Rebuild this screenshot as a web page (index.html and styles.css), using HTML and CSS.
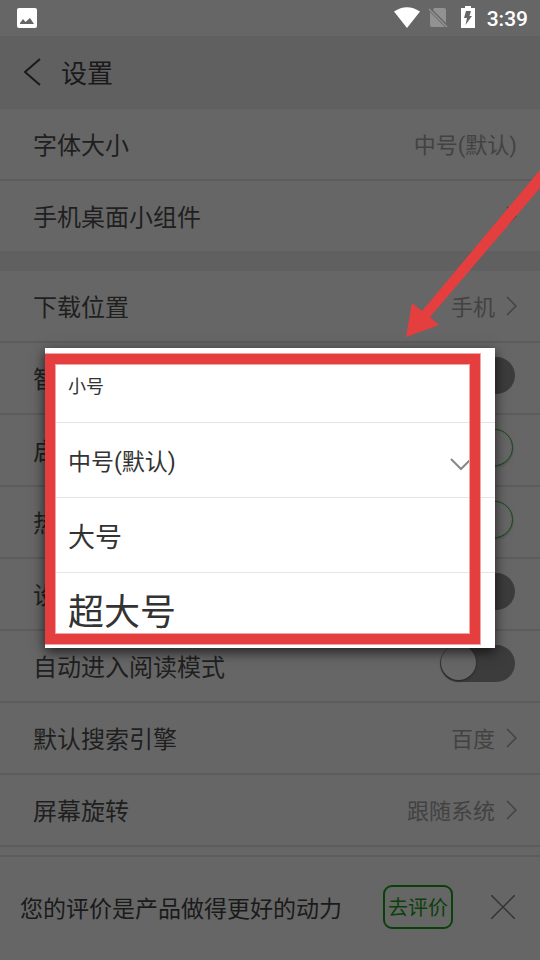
FILE: index.html
```html
<!DOCTYPE html>
<html lang="zh-CN">

<head>
    <meta charset="UTF-8">
    <meta name="viewport" content="width=device-width, initial-scale=1.0">
    <title>设置</title>
    <link rel="stylesheet" href="styles.css">
</head>

<body>
    <div class="statusbar">
        <svg class="photo" width="20" height="20" viewBox="0 0 20 20">
            <rect width="20" height="20" rx="2" fill="#fff" />
            <path d="M3 16v-1l3-4 2.500 3L13 10l4 6z" fill="#666" />
        </svg>
        <div class="status-icons">
            <svg width="26" height="22" viewBox="0 0 26 22">
                <path d="M0 5.500Q13-3 26 5.500L13 22z" fill="#fff" />
            </svg>
            <svg class="sim" width="20" height="22" viewBox="0 0 20 22">
                <path d="M6 2h10q2 0 2 2v13L5 4zM2 6l15 15H4q-2 0-2-2z" fill="#929292" />
                <path d="M1 3l18 18" stroke="#929292" stroke-width="1.500" />
            </svg>
            <svg class="battery" width="14" height="22" viewBox="0 0 14 22">
                <path d="M4 0h6v2h4v20H0V2h4z" fill="#fff" />
                <path d="M5 5h5L8.500 10H11L4.500 19l1.500-7H3z" fill="#666" />
            </svg>
            <span class="time">3:39</span>
        </div>
    </div>

    <header class="header">
        <a href="#" class="back" aria-label="返回">
            <svg width="18" height="28" viewBox="0 0 18 28">
                <path d="M17 1L2 14l15 13" />
            </svg>
        </a>
        <h1>设置</h1>
    </header>

    <main>
        <section class="group">
            <a href="#" class="row"><span>字体大小</span><span class="value">中号(默认)</span></a>
            <a href="#" class="row">
                <span>手机桌面小组件</span>
                <svg class="chevron" width="11" height="20" viewBox="0 0 11 20"><path d="M1 1l9 9-9 9" /></svg>
            </a>
        </section>

        <section class="group">
            <a href="#" class="row">
                <span>下载位置</span>
                <span class="value">手机</span>
                <svg class="chevron" width="11" height="20" viewBox="0 0 11 20"><path d="M1 1l9 9-9 9" /></svg>
            </a>
            <label class="row"><span>智</span><input type="checkbox" class="switch"></label>
            <label class="row"><span>启</span><input type="checkbox" class="switch" checked></label>
            <label class="row"><span>热</span><input type="checkbox" class="switch" checked></label>
            <label class="row"><span>设</span><input type="checkbox" class="switch"></label>
            <label class="row"><span>自动进入阅读模式</span><input type="checkbox" class="switch"></label>
            <a href="#" class="row">
                <span>默认搜索引擎</span>
                <span class="value">百度</span>
                <svg class="chevron" width="11" height="20" viewBox="0 0 11 20"><path d="M1 1l9 9-9 9" /></svg>
            </a>
            <a href="#" class="row">
                <span>屏幕旋转</span>
                <span class="value">跟随系统</span>
                <svg class="chevron" width="11" height="20" viewBox="0 0 11 20"><path d="M1 1l9 9-9 9" /></svg>
            </a>
        </section>
    </main>

    <footer class="rate">
        <p>您的评价是产品做得更好的动力</p>
        <button type="button" class="rate-btn">去评价</button>
        <button type="button" class="close" aria-label="关闭">
            <svg width="24" height="24" viewBox="0 0 24 24">
                <path d="M0 0l24 24M24 0L0 24" />
            </svg>
        </button>
    </footer>

    <div class="overlay">
        <form class="dialog" role="dialog" aria-label="字体大小">
            <label class="option small"><input type="radio" name="size"><span>小号</span></label>
            <label class="option medium">
                <input type="radio" name="size" checked>
                <span>中号(默认)</span>
                <svg class="check" width="22" height="13" viewBox="0 0 22 13"><path d="M1 1l10 10L21 1" /></svg>
            </label>
            <label class="option large"><input type="radio" name="size"><span>大号</span></label>
            <label class="option huge"><input type="radio" name="size"><span>超大号</span></label>
            <div class="frame"></div>
        </form>
    </div>

    <svg class="arrow" width="134" height="168" viewBox="0 0 134 168">
        <path d="M134 1L16 142 6 134 0 168l33-12-9-8L134 19z" />
    </svg>
</body>

</html>
```

FILE: styles.css
```css
* {
    box-sizing: border-box;
}

body {
    position: relative;
    display: flex;
    flex-direction: column;
    min-height: 100vh;
    margin: 0;
    background: #666;
    color: #1f1f1f;
    font-family: Roboto, "Noto Sans CJK SC", sans-serif;
    font-size: 24px;
}

svg {
    display: block;
    flex: none;
}

a {
    color: inherit;
    text-decoration: none;
}

.statusbar {
    display: flex;
    justify-content: space-between;
    align-items: center;
    height: 36px;
    padding: 0 12px 0 17px;
}

.status-icons {
    display: flex;
    align-items: center;
    height: 34px;
    margin-bottom: 2px;
}

.sim {
    margin-left: 8px;
}

.battery {
    margin: 0 12px 0 13px;
}

.time {
    padding-top: 3px;
    color: #fff;
    font-size: 21px;
    font-weight: 500;
}

.header {
    display: flex;
    align-items: center;
    gap: 20px;
    height: 73px;
    padding-left: 23px;
    background: #606060;
    border-bottom: 1px solid #5e5e5e;
}

.header h1 {
    margin: 0;
    padding-bottom: 2px;
    font-size: 26px;
    font-weight: 400;
    color: #1a1a1a;
}

.back path {
    fill: none;
    stroke: #1a1a1a;
    stroke-width: 2;
}

.group + .group {
    border-top: 20px solid #606060;
}

.row {
    display: flex;
    align-items: center;
    height: 72px;
    padding: 0 23px 0 33px;
    border-bottom: 2px solid #5c5c5c;
}

.group:first-child .row:last-child {
    height: 70px;
    border-bottom: none;
}

.row span {
    padding-bottom: 2px;
}

.row span:first-child {
    margin-right: auto;
}

.value {
    color: #424242;
    font-size: 22px;
}

.chevron {
    margin-left: 11px;
}

.chevron path {
    fill: none;
    stroke: #424242;
    stroke-width: 1.5;
}

.switch {
    appearance: none;
    width: 75px;
    height: 37px;
    margin: 0 2px 5px 0;
    border-radius: 19px;
    background: #3c3c3c;
}

.switch::before {
    content: '';
    display: block;
    width: 35px;
    height: 35px;
    margin: 0 1px;
    border-radius: 50%;
    background: #666;
    box-shadow: 0 1px 2px #222;
}

.switch:checked {
    margin-right: 4px;
    border: 1px solid #154d15;
    background: #666;
    box-shadow: 0 1px 2px #4c4c4c;
}

.switch:checked::before {
    margin-left: auto;
    box-shadow: none;
}

.rate {
    display: flex;
    align-items: center;
    height: 105px;
    margin-top: auto;
    padding: 0 25px 4px 20px;
    border-top: 2px solid #5c5c5c;
}

.rate p {
    margin: 0 auto 0 0;
    color: #1a1a1a;
    font-size: 23px;
}

.rate-btn {
    width: 70px;
    height: 44px;
    padding: 0;
    border: 2px solid #0a400a;
    border-radius: 9px;
    background: none;
    color: #0a400a;
    font-family: inherit;
    font-size: 20px;
}

.close {
    margin-left: 38px;
    padding: 0;
    border: none;
    background: none;
}

.close path {
    stroke: #333;
    stroke-width: 1.5;
}

.overlay {
    position: absolute;
    inset: 36px 0 0;
    display: flex;
    justify-content: center;
    align-items: center;
}

.dialog {
    position: relative;
    width: calc(100% - 90px);
    background: #fff;
    box-shadow: 0 4px 12px rgba(0, 0, 0, 0.7);
}

.option {
    display: flex;
    justify-content: space-between;
    align-items: center;
    height: 75px;
    padding: 0 23px;
    border-bottom: 1px solid #e5e5e5;
    color: #333;
}

.option input {
    appearance: none;
    position: absolute;
    margin: 0;
}

.check {
    margin-top: 8px;
}

.check path {
    fill: none;
    stroke: #888;
    stroke-width: 2;
}

.small {
    font-size: 18px;
}

.medium {
    font-size: 23px;
}

.large {
    font-size: 27px;
}

.huge {
    padding-bottom: 3px;
    border-bottom: none;
    font-size: 36px;
}

.frame {
    position: absolute;
    inset: 6px 15px 4px 0;
    border: 10px solid #e53e3e;
    box-shadow: 0 0 0 1px #f3a5a5, inset 0 0 0 1px #f3a5a5;
    clip-path: inset(-1px -1px -1px 0);
    pointer-events: none;
}

.arrow {
    position: absolute;
    top: 169px;
    right: 0;
    pointer-events: none;
}

.arrow path {
    fill: #e53e3e;
}
```
